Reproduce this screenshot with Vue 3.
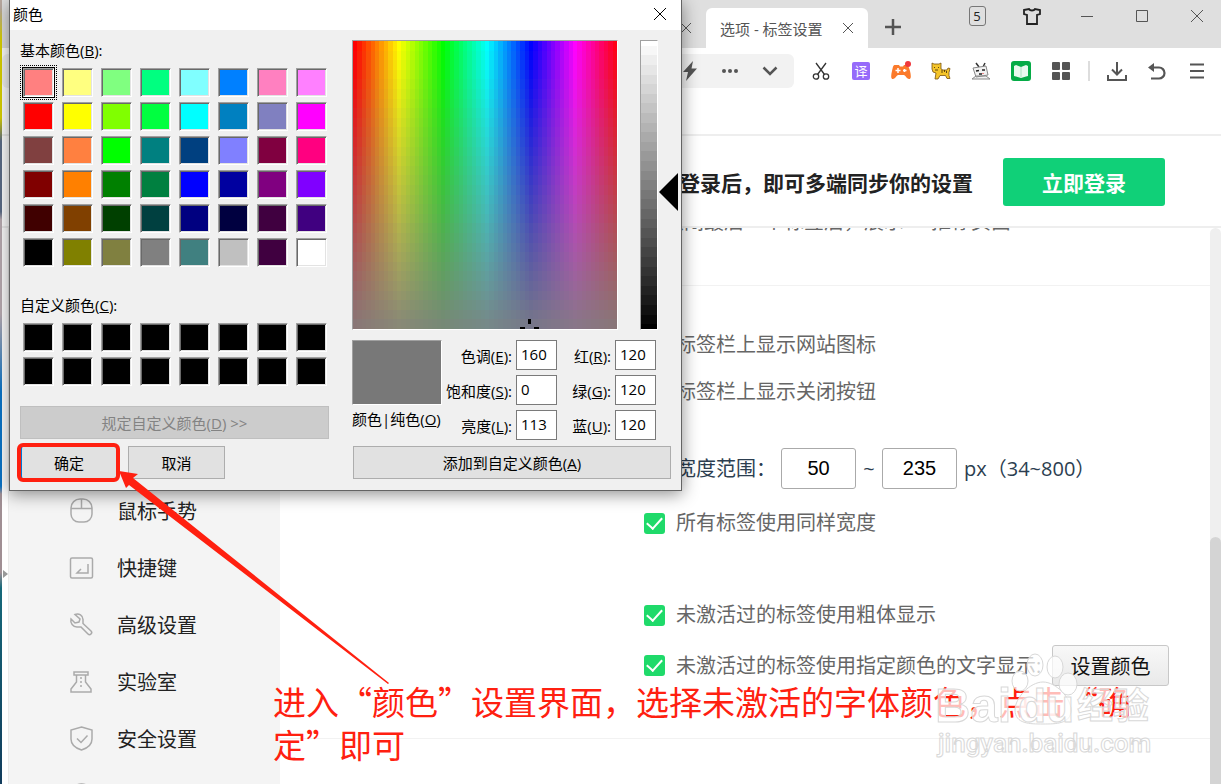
<template>
  <div class="screen">
    <div class="desktop-edge"></div>

    <div class="browser">
      <!-- tab strip -->
      <header class="tab-bar">
        <div class="tab tab-idle">
          <button class="icon-btn tab-close" aria-label="关闭标签">
            <svg width="12" height="12" viewBox="0 0 12 12"><path d="M1 1l10 10M11 1L1 11" /></svg>
          </button>
        </div>
        <div class="tab tab-active">
          <span>选项 - 标签设置</span>
          <button class="icon-btn tab-close" aria-label="关闭标签">
            <svg width="12" height="12" viewBox="0 0 12 12"><path d="M1 1l10 10M11 1L1 11" /></svg>
          </button>
        </div>
        <button class="icon-btn new-tab" aria-label="新建标签">
          <svg width="16" height="16" viewBox="0 0 16 16" stroke-width="2.500"><path d="M8 0v16M0 8h16" /></svg>
        </button>
        <div class="window-controls">
          <button class="icon-btn"><span class="tab-count">5</span></button>
          <button class="icon-btn" aria-label="皮肤">
            <svg width="18" height="17" viewBox="0 0 18 17" stroke="#222" stroke-width="1.800">
              <path d="M1 2l5-1c1 2 5 2 6 0l5 1v4l-3 1v9H4V7L1 6z" />
            </svg>
          </button>
          <button class="icon-btn" aria-label="最小化">
            <svg width="14" height="14" viewBox="0 0 14 14"><path d="M1 7.500h12" /></svg>
          </button>
          <button class="icon-btn" aria-label="最大化">
            <svg width="14" height="14" viewBox="0 0 14 14"><path d="M1.500 1.500h11v11h-11z" /></svg>
          </button>
          <button class="icon-btn" aria-label="关闭">
            <svg width="14" height="14" viewBox="0 0 14 14"><path d="M1 1l12 12M13 1L1 13" /></svg>
          </button>
        </div>
      </header>

      <!-- toolbar -->
      <div class="toolbar">
        <div class="address-tools">
          <button class="icon-btn tool" aria-label="极速模式">
            <svg width="16" height="20" viewBox="0 0 16 20"><path d="M11 0L1 11h5L4 20 15 7.500H9.500z" fill="#555" stroke="none" /></svg>
          </button>
          <button class="icon-btn tool" aria-label="更多">
            <svg width="18" height="6" viewBox="0 0 18 6" fill="#555" stroke="none"><circle cx="3" cy="3" r="2" /><circle cx="9" cy="3" r="2" /><circle cx="15" cy="3" r="2" /></svg>
          </button>
          <button class="icon-btn tool" aria-label="展开">
            <svg width="16" height="10" viewBox="0 0 16 10"><path d="M1.500 1.500L8 8l6.500-6.500" stroke-width="2.500" /></svg>
          </button>
        </div>
        <button class="icon-btn tool" aria-label="截图">
          <svg width="18" height="18" viewBox="0 0 18 18" stroke="#333" stroke-width="1.300">
            <circle cx="4" cy="14.500" r="2.700" /><circle cx="14" cy="14.500" r="2.700" />
            <path d="M4 1l8.500 11.500M14 1L5.500 12.500" />
          </svg>
        </button>
        <button class="icon-btn tool"><span class="translate">译</span></button>
        <button class="icon-btn tool" aria-label="游戏">
          <svg width="20" height="20" viewBox="0 0 20 20" stroke="none">
            <path d="M4 4h4l1 1.500h3L13 4h2c2 0 3 2 4 6s1.500 8-1 8c-2 0-3-3-5-4H7c-2 1-3 4-5 4-2.500 0-2-4-1-8S2 4 4 4z" fill="#fb7a2b" />
            <path d="M4.500 9.500h5M7 7v5M12 9.500h3.500M13.500 8v3" stroke="#fff" stroke-width="1.500" />
            <circle cx="17" cy="3" r="3" fill="#f0383c" />
          </svg>
        </button>
        <button class="icon-btn tool" aria-label="宠物">
          <svg width="20" height="18" viewBox="0 0 20 18" stroke="#7a5310" stroke-width=".8" fill="#f5c52a">
            <path d="M1 1l2 1h5l2-1v6l2 1h4l1-2 2 .500-1 4v3l1 3h-3l-1.500-3H9l-2 3.500H4L5 11l-3-1-1-3z" />
            <path d="M3.500 5v1M7.500 5v1M4 8h3M11 8v3M13.500 8v2M15.500 9v2" stroke="#3c2a08" />
          </svg>
        </button>
        <button class="icon-btn tool" aria-label="小电视">
          <svg width="20" height="18" viewBox="0 0 20 18" stroke="#888" stroke-width="1" fill="#f1f1f1">
            <path d="M5 1l3 4M14 1l-2 4" stroke="#333" stroke-width="1.500" />
            <path d="M2 6l13-2 2 9-12 2zM1 17l4-3h10l4 3z" />
            <path d="M5 9l3-.500M11 8h3M8 12h3" stroke="#222" stroke-width="1.500" />
            <path d="M11 11.500h2" stroke="#e88" />
          </svg>
        </button>
        <button class="icon-btn tool" aria-label="小说">
          <svg width="20" height="20" viewBox="0 0 20 20" stroke="none">
            <rect width="20" height="20" rx="3" fill="#05ab46" />
            <path d="M3 5l2-1 5 2 5-2 2 1v10l-2 .500-5 1.500-5-1.500-2-.500z" fill="#e9f8ee" />
            <path d="M10 6v10" stroke="#9bd8b2" stroke-width=".8" />
          </svg>
        </button>
        <button class="icon-btn tool" aria-label="扩展">
          <svg width="18" height="18" viewBox="0 0 18 18" stroke="none" fill="#555"><rect width="8" height="8" rx="1" /><rect x="10" width="8" height="8" rx="1" /><rect y="10" width="8" height="8" rx="1" /><rect x="10" y="10" width="8" height="8" rx="1" /></svg>
        </button>
        <span class="tool-divider"></span>
        <button class="icon-btn tool" aria-label="下载">
          <svg width="20" height="19" viewBox="0 0 20 19" stroke-width="2"><path d="M10 0v12M5 7.500l5 5 5-5M1 13v5h18v-5" /></svg>
        </button>
        <button class="icon-btn tool" aria-label="撤销">
          <svg width="18" height="18" viewBox="0 0 18 18" stroke-width="2.200"><path d="M3 5.500h8a5.500 5.500 0 0 1 0 11H3" /><path d="M0 5.500L6 1v9z" fill="#555" stroke="none" /></svg>
        </button>
        <button class="icon-btn tool" aria-label="菜单">
          <svg width="16" height="16" viewBox="0 0 16 16" stroke-width="2"><path d="M1 1.500h14M1 8h14M1 14.500h14" /></svg>
        </button>
      </div>

      <!-- login banner -->
      <div class="login-bar">
        <strong>登录后，即可多端同步你的设置</strong>
        <button class="login-btn">立即登录</button>
      </div>

      <div class="content">
        <div class="gutter">
          <svg width="5" height="8" viewBox="0 0 5 8"><path d="M0 0l5 4-5 4z" fill="#999" /></svg>
        </div>

        <nav class="sidebar">
          <a v-for="item in menu" :key="item.name" href="#" class="menu-item">
            <svg width="26" height="26" viewBox="0 0 26 26"><path :d="item.icon" /></svg>
            <span>{{ item.name }}</span>
          </a>
        </nav>

        <main class="settings">
          <section class="section section-top">
            <div class="row">关闭最后一个标签后，展示　“推荐页面”</div>
          </section>

          <section class="section section-tabs">
            <div class="group group-show">
              <label class="row"><input type="checkbox" checked />标签栏上显示网站图标</label>
              <label class="row"><input type="checkbox" checked />标签栏上显示关闭按钮</label>
            </div>
            <div class="group group-width">
              <div class="row range">
                <label for="min-width" class="range-label">宽度范围：</label>
                <input id="min-width" type="text" class="width-input" value="50" />
                <span class="tilde">~</span>
                <input type="text" class="width-input" value="235" aria-label="最大宽度" />
                <span class="unit">px</span>
                <span>（34~800）</span>
              </div>
              <label class="row"><input type="checkbox" checked />所有标签使用同样宽度</label>
            </div>
            <div class="group group-idle">
              <label class="row"><input type="checkbox" checked />未激活过的标签使用粗体显示</label>
              <div class="row">
                <label class="row color-label"><input type="checkbox" checked />未激活过的标签使用指定颜色的文字显示:</label>
                <button class="set-color">设置颜色</button>
              </div>
            </div>
          </section>
        </main>

        <div class="scrollbar"><div class="thumb"></div></div>
      </div>
    </div>

    <!-- colour dialog -->
    <div class="dialog" role="dialog" aria-label="颜色">
      <div class="dialog-title">
        <span>颜色</span>
        <button class="icon-btn" aria-label="关闭">
          <svg width="14" height="14" viewBox="0 0 14 14" stroke="#000"><path d="M1 1l12 12M13 1L1 13" /></svg>
        </button>
      </div>

      <div class="dialog-body">
        <div class="palette">
          <div class="caption">基本颜色(<u>B</u>):</div>
          <div class="swatches">
            <button
              v-for="(color, i) in basicColors"
              :key="i"
              class="swatch"
              :class="{ selected: i === 0 }"
              :style="{ background: color }"
              :aria-label="color"
            ></button>
          </div>
          <div class="caption custom-caption">自定义颜色(<u>C</u>):</div>
          <div class="swatches">
            <button v-for="n in 16" :key="n" class="swatch custom" :aria-label="`自定义 ${n}`"></button>
          </div>
          <button class="win-btn define" disabled>规定自定义颜色(<u>D</u>) &gt;&gt;</button>
          <div class="actions">
            <button class="win-btn ok">确定</button>
            <button class="win-btn">取消</button>
          </div>
        </div>

        <div class="mixer">
          <div class="mixer-top">
            <div class="spectrum">
              <canvas ref="spectrum" width="60" height="30"></canvas>
              <svg class="crosshair" width="20" height="10" viewBox="0 0 20 10">
                <path d="M8 0h3v5H8zM0 8h5v2H0zM14 8h5v2h-5z" />
              </svg>
            </div>
            <div class="luminance">
              <canvas ref="luminance" width="1" height="60"></canvas>
              <svg class="pointer" width="19" height="38" viewBox="0 0 19 38"><path d="M0 19L19 0v38z" /></svg>
            </div>
          </div>

          <div class="mixer-values">
            <div class="solid">
              <div class="solid-color"></div>
              <div class="caption">颜色|纯色(<u>O</u>)</div>
            </div>
            <div class="fields">
              <template v-for="field in fields" :key="field.key">
                <label :for="'field-' + field.key">{{ field.name }}(<u>{{ field.key }}</u>):</label>
                <input :id="'field-' + field.key" type="text" :value="field.value" />
              </template>
            </div>
          </div>

          <button class="win-btn add">添加到自定义颜色(<u>A</u>)</button>
        </div>
      </div>
    </div>

    <!-- tutorial notes drawn over the windows -->
    <svg class="arrow" width="272" height="215" viewBox="0 0 272 215">
      <path d="M0 0l19 3-5 4 256 205-1 1L10 14l-3 3z" />
    </svg>
    <p class="note">进入“颜色”设置界面，选择未激活的字体颜色，点击“确定”即可</p>

    <svg class="watermark" width="230" height="115" viewBox="0 0 230 115">
      <ellipse cx="105" cy="15" rx="8" ry="11" />
      <ellipse cx="125" cy="17" rx="8" ry="11" />
      <ellipse cx="90" cy="31" rx="8" ry="10" />
      <ellipse cx="138" cy="34" rx="9" ry="11" />
      <path d="M113 32c13 0 28 16 28 28 0 14-15 14-28 14s-28 0-28-14c0-12 15-28 28-28z" />
      <text x="5" y="72" class="mark-name">Bai</text>
      <text x="88" y="72" class="mark-name mark-du">du</text>
      <text x="147" y="69" class="mark-cn">经验</text>
      <text x="8" y="102" class="mark-url">jingyan.baidu.com</text>
    </svg>
  </div>
</template>

<script setup>
import { onMounted, ref } from 'vue';

const basicColors = [
  '#ff8080', '#ffff80', '#80ff80', '#00ff80', '#80ffff', '#0080ff', '#ff80c0', '#ff80ff',
  '#ff0000', '#ffff00', '#80ff00', '#00ff40', '#00ffff', '#0080c0', '#8080c0', '#ff00ff',
  '#804040', '#ff8040', '#00ff00', '#008080', '#004080', '#8080ff', '#800040', '#ff0080',
  '#800000', '#ff8000', '#008000', '#008040', '#0000ff', '#0000a0', '#800080', '#8000ff',
  '#400000', '#804000', '#004000', '#004040', '#000080', '#000040', '#400040', '#400080',
  '#000000', '#808000', '#808040', '#808080', '#408080', '#c0c0c0', '#400040', '#ffffff',
];

const fields = [
  { key: 'E', name: '色调', value: 160 },
  { key: 'R', name: '红', value: 120 },
  { key: 'S', name: '饱和度', value: 0 },
  { key: 'G', name: '绿', value: 120 },
  { key: 'L', name: '亮度', value: 113 },
  { key: 'U', name: '蓝', value: 120 },
];

const menu = [
  {
    name: '鼠标手势',
    icon: 'M12 1h3a9 9 0 0 1 9 9v6a8 8 0 0 1-8 8h-5a8 8 0 0 1-8-8v-6a9 9 0 0 1 9-9zM3 10.500h21M13.500 1v9.500',
  },
  {
    name: '快捷键',
    icon: 'M4 3h19a1.500 1.500 0 0 1 1.500 1.500v17A1.500 1.500 0 0 1 23 23H4a1.500 1.500 0 0 1-1.500-1.500v-17A1.500 1.500 0 0 1 4 3zM20 9v9H9l4-4',
  },
  {
    name: '高级设置',
    icon: 'M7 2.500c4-1.500 8 1 8 5v4l8 7.500c2 2-1 5-3 3l-7-7H9c-4 0-7-4-6-8l4 4 4-1 1-3z',
  },
  {
    name: '实验室',
    icon: 'M6 3h14v3H6zM8.500 6v7L3 20v3h20v-3l-5.500-7V6M13 8v2M13 12v2M13 16v2',
  },
  {
    name: '安全设置',
    icon: 'M13.500 1L24 4v9c0 5-4 9-10.500 11C7 22 3 18 3 13V4zM9 12.500l4 4 6.500-7',
  },
  {
    name: '广告过滤',
    icon: 'M13.500 1a11 11 0 1 0 .100 0zM13 7v7h5',
  },
];

const spectrum = ref(null);
const luminance = ref(null);

onMounted(() => {
  // hue runs left to right, saturation fades downwards
  const ctx = spectrum.value.getContext('2d');
  for (let x = 0; x < 60; x++) {
    for (let y = 0; y < 30; y++) {
      ctx.fillStyle = `hsl(${x * 6}, ${100 - (y * 96) / 30}%, 50%)`;
      ctx.fillRect(x, y, 1, 1);
    }
  }

  const bar = luminance.value.getContext('2d');
  for (let y = 0; y < 60; y++) {
    const step = Math.ceil(y / 2);
    bar.fillStyle = `hsl(0, 0%, ${100 - (step * 100) / 30}%)`;
    bar.fillRect(0, y, 1, 1);
  }
});
</script>

<style>
body {
  overflow: hidden;
}
</style>

<style scoped>
* {
  box-sizing: border-box;
}

.screen {
  position: relative;
  display: flex;
  height: 100vh;
  overflow: hidden;
  background: #fff;
  font-family: 'Open Sans', 'Noto Sans CJK SC', sans-serif;
}

button,
input {
  font-family: inherit;
  margin: 0;
}

.desktop-edge {
  flex: 0 0 2px;
  background: linear-gradient(#b9a9a0 0 1%, #d8d000 5% 15%, #5b6b85 18% 27%, #b8aab0 28% 40%, #0a74c8 50% 62%, #a08f94 63% 73%, #16697a 75%, #123c5c);
}

.browser {
  flex: 1;
  min-width: 0;
  display: flex;
  flex-direction: column;
}

.icon-btn {
  display: flex;
  align-items: center;
  justify-content: center;
  padding: 0;
  border: 0;
  background: none;
  fill: none;
  stroke: #555;
}

/* ===== tab strip ===== */
.tab-bar {
  flex: 0 0 48px;
  display: flex;
  background: #dfdfdf;
}

.tab {
  display: flex;
  align-items: center;
  justify-content: space-between;
  height: 40px;
  margin-top: 8px;
  padding: 0 14px;
  font-size: 15px;
  color: #555;
}

.tab-idle {
  flex: 0 0 704px;
  justify-content: flex-end;
}

.tab-active {
  flex: 0 0 162px;
  border-radius: 6px 6px 0 0;
  background: #fff;
}

.new-tab {
  width: 50px;
  height: 40px;
  margin-top: 7px;
}

.window-controls {
  display: flex;
  gap: 9px;
  margin-left: auto;
  padding-right: 1px;
}

.window-controls .icon-btn {
  width: 46px;
  height: 32px;
}

.tab-count {
  width: 17px;
  height: 20px;
  border: 1px solid #777;
  border-radius: 3px;
  font-size: 13px;
  line-height: 18px;
  color: #222;
}

/* ===== toolbar ===== */
.toolbar {
  flex: 0 0 88px;
  display: flex;
  justify-content: flex-end;
  align-items: flex-start;
  padding: 6px 4px 0 0;
  border-bottom: 2px solid #eee;
}

.tool {
  width: 40px;
  height: 34px;
}

.address-tools {
  flex: 1;
  display: flex;
  justify-content: flex-end;
  margin-right: 7px;
  padding-right: 4px;
  border-radius: 6px;
  background: #f2f2f2;
}

.translate {
  width: 18px;
  height: 18px;
  border-radius: 2px;
  background: #966bfa;
  font-size: 13px;
  line-height: 18px;
  color: #fff;
}

.tool-divider {
  width: 2px;
  height: 20px;
  margin: 7px;
  background: #ddd;
}

/* ===== login banner ===== */
.login-bar {
  flex: 0 0 92px;
  display: flex;
  align-items: center;
  justify-content: flex-end;
  gap: 30px;
  padding: 2px 56px 0 0;
  border-bottom: 2px solid #eee;
  font-size: 21px;
  color: #222;
}

.login-btn {
  width: 162px;
  height: 48px;
  border: 0;
  border-radius: 3px;
  background: #10d078;
  font-size: 21px;
  font-weight: 700;
  color: #fff;
}

/* ===== settings page ===== */
.content {
  flex: 1;
  min-height: 0;
  display: flex;
  overflow: hidden;
}

.gutter {
  flex: 0 0 7px;
  padding: 342px 0 0 1px;
  border-right: 1px solid #eaeaea;
}

.gutter svg {
  display: block;
}

.sidebar {
  flex: 0 0 271px;
  padding-top: 254px;
  background: #f4f4f4;
}

.menu-item {
  display: flex;
  align-items: center;
  gap: 23px;
  height: 57px;
  padding-left: 59px;
  font-size: 20px;
  color: #222;
  text-decoration: none;
}

.menu-item svg {
  fill: none;
  stroke: #aaa;
  stroke-width: 1.500;
}

.settings {
  flex: 1;
  min-width: 0;
  overflow: hidden;
  font-size: 20px;
  line-height: 28px;
  color: #666;
}

.section {
  padding-left: 364px;
  border-bottom: 1px solid #f2f2f2;
}

.section-top {
  display: flex;
  align-items: flex-start;
  height: 58px;
  padding-left: 384px;
}

.section-top .row {
  margin-top: -20px;
}

.section-tabs {
  display: grid;
  padding-top: 45px;
  padding-bottom: 52px;
}

.row {
  display: flex;
  align-items: center;
  white-space: nowrap;
}

.group {
  display: grid;
}

.group-show {
  gap: 19px;
}

.group-width {
  gap: 20px;
  margin-top: 42px;
}

.group-idle {
  gap: 16px;
  margin-top: 64px;
}

input[type='checkbox'] {
  appearance: none;
  flex: none;
  display: flex;
  justify-content: center;
  width: 21px;
  height: 21px;
  margin-right: 11px;
  border-radius: 3px;
  background: #1fda6a;
}

input[type='checkbox']::after {
  content: '';
  width: 7px;
  height: 13px;
  margin-top: 1px;
  border: solid #fff;
  border-width: 0 2px 2px 0;
  transform: rotate(42deg);
}

.range {
  padding-left: 32px;
  color: #2c3e50;
}

.range-label {
  width: 105px;
}

.width-input {
  width: 75px;
  height: 41px;
  border: 1px solid #aaa;
  border-radius: 3px;
  background: #fff;
  font-family: 'Liberation Sans', sans-serif;
  font-size: 20px;
  text-align: center;
  color: #000;
}

.tilde {
  width: 26px;
  text-align: center;
}

.unit {
  margin-left: 7px;
}

.color-label {
  width: 408px;
}

.set-color {
  width: 117px;
  height: 41px;
  padding: 0;
  border: 1px solid #c8c8c8;
  border-radius: 3px;
  background: linear-gradient(#f8f8f8, #e9e9e9);
  font-size: 20px;
  color: #111;
}

.scrollbar {
  flex: 0 0 11px;
  padding-top: 309px;
  border-radius: 6px 6px 0 0;
  background: #efefef;
}

.thumb {
  height: 100%;
  border-radius: 6px 6px 0 0;
  background: #d4d4d4;
}

/* ===== colour dialog ===== */
.dialog {
  position: absolute;
  top: 0;
  left: 9px;
  width: 673px;
  border: 1px solid #646464;
  border-top: 0;
  background: #f0f0f0;
  box-shadow: 0 3px 16px rgba(0, 0, 0, 0.45);
  font-size: 15px;
  line-height: 20px;
  color: #000;
}

.dialog-title {
  display: flex;
  justify-content: space-between;
  align-items: center;
  height: 30px;
  padding: 0 14px 2px 3px;
  background: #fff;
}

.dialog-body {
  display: flex;
  justify-content: space-between;
  padding: 10px 10px 11px;
}

.palette {
  width: 309px;
}

.caption {
  white-space: nowrap;
}

.custom-caption {
  margin-top: 28px;
}

.swatches {
  display: grid;
  grid-template-columns: repeat(8, 31px);
  gap: 5px 8px;
  margin: 8px 0 0 3px;
}

.swatch {
  position: relative;
  height: 29px;
  padding: 0;
  border: 1px solid;
  border-color: #a0a0a0 #fff #fff #a0a0a0;
  box-shadow: inset 1px 1px #696969, inset -1px -1px #e3e3e3;
}

.swatch.custom {
  background: #000;
}

.swatch.selected {
  outline: 1px solid #000;
}

.swatch.selected::after {
  content: '';
  position: absolute;
  inset: -4px;
  border: 1px dotted #000;
}

.win-btn {
  height: 33px;
  padding: 0;
  border: 1px solid #adadad;
  background: #e1e1e1;
  font-size: 15px;
  color: #000;
}

.define {
  width: 100%;
  margin-top: 20px;
  border-color: #bfbfbf;
  background: #ccc;
  color: #838383;
}

.actions {
  display: flex;
  gap: 11px;
  margin-top: 7px;
}

.actions .win-btn {
  width: 97px;
}

.actions .ok {
  border-left: 2px solid #0078d7;
  border-radius: 3px;
  outline: 4px solid #ff2010;
  outline-offset: -1px;
}

.mixer {
  display: flex;
  flex-direction: column;
  width: 319px;
}

.mixer-top {
  display: flex;
  gap: 22px;
}

.spectrum,
.luminance {
  position: relative;
  height: 290px;
  border: 1px solid;
  border-color: #a0a0a0 #fff #fff #a0a0a0;
}

.spectrum {
  width: 266px;
}

.luminance {
  width: 18px;
}

canvas {
  display: block;
  width: 100%;
  height: 100%;
  image-rendering: pixelated;
}

.crosshair {
  position: absolute;
  left: 167px;
  bottom: 0;
}

.pointer {
  position: absolute;
  top: 132px;
  left: 18px;
}

.mixer-values {
  display: flex;
  gap: 4px;
  margin-top: 10px;
}

.solid {
  width: 90px;
}

.solid-color {
  height: 65px;
  margin-bottom: 4px;
  border: 1px solid;
  border-color: #a0a0a0 #fff #fff #a0a0a0;
  background: #787878;
}

.fields {
  display: grid;
  grid-template-columns: 66px 41px 50px 41px;
  gap: 5px 4px;
}

.fields label {
  line-height: 32px;
  height: 30px;
  text-align: right;
  white-space: nowrap;
}

.fields input {
  width: 41px;
  height: 30px;
  padding: 0 0 3px 4px;
  border: 1px solid #7a7a7a;
  border-radius: 0;
  background: #fff;
  font-size: 15px;
  color: #000;
}

.add {
  margin: 6px 0 0 1px;
}

/* ===== notes and watermark ===== */
.arrow {
  position: absolute;
  top: 471px;
  left: 119px;
  fill: #ff2010;
}

.note {
  position: absolute;
  top: 680px;
  left: 273px;
  width: 870px;
  margin: 0;
  font-family: 'Noto Sans CJK SC', sans-serif;
  font-size: 33px;
  line-height: 43px;
  color: #ff2010;
}

.watermark {
  position: absolute;
  top: 650px;
  left: 930px;
  fill: rgba(255, 255, 255, 0.7);
  stroke: #d8d8d8;
  stroke-width: 1;
}

.mark-name {
  font: 700 49px 'Liberation Sans', sans-serif;
}

.mark-du {
  font-size: 46px;
}

.mark-cn {
  font-size: 36px;
  font-weight: 700;
}

.mark-url {
  font: 500 26px 'Roboto', sans-serif;
}
</style>
